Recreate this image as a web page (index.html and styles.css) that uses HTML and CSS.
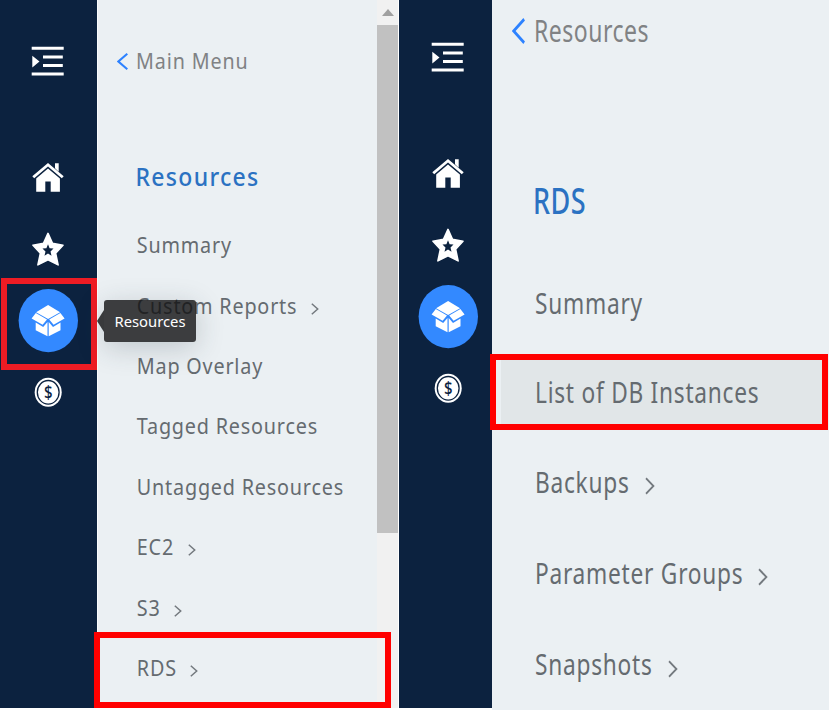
FILE: index.html
```html
<!DOCTYPE html>
<html lang="en">
<head>
<meta charset="utf-8">
<title>Resources menu</title>
<link rel="stylesheet" href="styles.css">
</head>
<body>
<svg class="defs" aria-hidden="true">
  <symbol id="i-menu" viewBox="0 30 97 80">
    <path fill="#fff" d="M31.7 46.8h32v3h-32zM43 55.4h19.8v3.2H43zM43 63.9h19.8v3.2H43zM31.7 72.5h32v3h-32zM32.3 55.7l7.2 5.9-7.2 6z"/>
  </symbol>
  <symbol id="i-home" viewBox="0 140 97 72">
    <path fill="#fff" d="M55 163.3h3.7v8.5L55 168.2z"/>
    <path fill="#fff" d="M48 163l15.7 13.2-1.9 2.1L48 166.5l-13.8 11.8-1.9-2.1z"/>
    <path fill="#fff" d="M48 168.4l11.9 10.2v13.2h-9.2v-10.3h-5.4v10.3h-9.1v-13.2z"/>
  </symbol>
  <symbol id="i-star" viewBox="0 212 97 72">
    <path fill="#fff" stroke="#fff" stroke-width="1.6" stroke-linejoin="round" d="M48 233.4l4.4 9.8 10.6 2-7.4 8 2.5 11.7L48 259.8 37.9 264.9l2.5-11.7-7.4-8 10.6-2z"/>
    <path fill="#0c223f" d="M48 244.2l1.6 4 3.9.3-3 2.9 1 4.4-3.5-2.4-3.5 2.4 1-4.4-3-2.9 3.9-.3z"/>
  </symbol>
  <symbol id="i-box" viewBox="0 284 97 72">
    <ellipse cx="48.3" cy="320.6" rx="29.7" ry="31.6" fill="#3389ff"/>
    <g fill="#fff">
      <path d="M48.1 305l12 7.2-12 6.8-12-6.8zM35.8 313.1l11.2 6.4-4.4 5.3-11-6.2zM60.4 313.1l-11.2 6.4 4.4 5.3 11-6.2z"/>
      <path d="M35.7 322.4l7.5 4.5 4.3-5v14.4l-11.8-6zM60.5 322.4l-7.5 4.5-4.3-5v14.4l11.8-6z"/>
    </g>
  </symbol>
  <symbol id="i-coin" viewBox="0 356 97 72">
    <ellipse cx="48.2" cy="392.3" rx="13.5" ry="14.5" fill="#fff"/>
    <ellipse cx="48.2" cy="392.3" rx="10.9" ry="11.8" fill="none" stroke="#0c223f" stroke-width="1.3"/>
    <text transform="translate(48.2 398.9) scale(1 1.15)" text-anchor="middle" class="dollar">$</text>
  </symbol>
  <symbol id="i-next" viewBox="0 0 8 12">
    <path fill="none" stroke="#73797e" stroke-width="1.5" d="M.8.8L6.7 6 .8 11.2"/>
  </symbol>
</svg>

<main class="screens">
  <nav class="rail">
    <svg class="menu-icon"><use href="#i-menu"/></svg>
    <svg><use href="#i-home"/></svg>
    <svg><use href="#i-star"/></svg>
    <svg><use href="#i-box"/></svg>
    <svg><use href="#i-coin"/></svg>
    <div class="mark mark-icon"></div>
    <div class="tooltip">Resources</div>
  </nav>

  <section class="panel panel-main">
    <div class="back">
      <svg class="chev-back" viewBox="0 0 11 17" preserveAspectRatio="none"><path d="M10.3 .8L1.4 8.5l8.9 7.7"/></svg>
      <span class="label">Main Menu</span>
    </div>
    <h2><span class="label">Resources</span></h2>
    <ul class="list">
      <li><span class="label">Summary</span></li>
      <li><span class="label">Custom Reports</span><svg class="next"><use href="#i-next"/></svg></li>
      <li><span class="label">Map Overlay</span></li>
      <li><span class="label">Tagged Resources</span></li>
      <li><span class="label">Untagged Resources</span></li>
      <li><span class="label">EC2</span><svg class="next"><use href="#i-next"/></svg></li>
      <li><span class="label">S3</span><svg class="next"><use href="#i-next"/></svg></li>
      <li><span class="label">RDS</span><svg class="next"><use href="#i-next"/></svg></li>
    </ul>
    <div class="mark mark-rds"></div>
  </section>

  <div class="scroll">
    <svg class="arrow" viewBox="0 0 12 7"><path d="M0 7L6 0l6 7z"/></svg>
    <div class="thumb"></div>
  </div>

  <nav class="rail rail-sub">
    <svg class="menu-icon"><use href="#i-menu"/></svg>
    <svg><use href="#i-home"/></svg>
    <svg><use href="#i-star"/></svg>
    <svg><use href="#i-box"/></svg>
    <svg><use href="#i-coin"/></svg>
  </nav>

  <section class="panel panel-sub">
    <div class="back">
      <svg class="chev-back" viewBox="0 0 11 17" preserveAspectRatio="none"><path d="M10.3 .8L1.4 8.5l8.9 7.7"/></svg>
      <span class="label">Resources</span>
    </div>
    <h2><span class="label">RDS</span></h2>
    <ul class="list">
      <li><span class="label">Summary</span></li>
      <li class="active"><span class="label">List of DB Instances</span></li>
      <li><span class="label">Backups</span><svg class="next" viewBox="0 0 8 12" preserveAspectRatio="none"><path d="M.8.8L6.7 6 .8 11.2"/></svg></li>
      <li><span class="label">Parameter Groups</span><svg class="next" viewBox="0 0 8 12" preserveAspectRatio="none"><path d="M.8.8L6.7 6 .8 11.2"/></svg></li>
      <li><span class="label">Snapshots</span><svg class="next" viewBox="0 0 8 12" preserveAspectRatio="none"><path d="M.8.8L6.7 6 .8 11.2"/></svg></li>
    </ul>
    <div class="mark mark-db"></div>
  </section>
</main>
</body>
</html>
```
FILE: styles.css
```css
* { box-sizing: border-box; }

body {
  margin: 0;
  background: #fff;
  font-family: "Noto Sans", "Open Sans", sans-serif;
  color: #656b70;
}

.defs { position: absolute; width: 0; height: 0; }

.screens {
  display: grid;
  grid-template-columns: 97px 280px 22px 93px 337px;
  width: 829px;
  height: 710px;
  overflow: hidden;
}

/* icon rails */
.rail {
  position: relative;
  height: 708px;
  padding-top: 30px;
  background: #0c223f;
}
.rail svg { display: block; width: 97px; height: 72px; }
.rail .menu-icon { height: 80px; margin-bottom: 30px; }
.rail-sub { padding-top: 26px; overflow: hidden; }
.rail-sub svg { margin-left: 1px; }

.dollar { font: 500 15px "Noto Sans", sans-serif; fill: #0c223f; }

.tooltip {
  position: absolute;
  z-index: 3;
  left: 104px;
  top: 300px;
  width: 92px;
  height: 42px;
  border-radius: 3px;
  background: rgba(16, 16, 17, .8);
  box-shadow: 0 6px 28px rgba(40, 55, 70, .22);
  color: #fff;
  font-size: 14.8px;
  line-height: 43px;
  text-align: center;
}
.tooltip::before {
  content: "";
  position: absolute;
  left: -7px;
  top: 10px;
  border: solid transparent;
  border-width: 11px 7px 11px 0;
  border-right-color: rgba(16, 16, 17, .8);
}

/* red highlight frames */
.mark { position: absolute; z-index: 2; border: 6px solid #f00; }
.mark-icon { left: 1px; top: 278px; width: 96px; height: 92px; border-color: #ee1c24; }
.mark-rds { left: -4px; top: 632px; width: 297px; height: 76px; }
.mark-db { left: -2px; top: 354px; width: 338px; height: 76px; }

/* menu panels */
.panel { position: relative; background: #ebf0f3; }
.panel-main { height: 708px; border-left: 1px solid #fafcfd; }

.back { display: flex; align-items: center; color: #808284; }
.chev-back { fill: none; stroke: #2d82ff; stroke-width: 2.1; }

h2 { display: flex; align-items: center; margin: 0; color: #2b72c2; font-weight: 500; }
.list { margin: 0; padding: 0; list-style: none; }
.list li { display: flex; align-items: center; white-space: nowrap; }

/* condensed look: letters are stretched vertically */
.panel-main .label { transform: scaleY(1.1); }
.panel-sub .label { transform: scaleY(1.32); }

.panel-main .back { height: 122px; padding-left: 19px; font-size: 19.7px; letter-spacing: .9px; }
.panel-main .back .label { margin-bottom: 1px; }
.panel-main .chev-back { width: 11px; height: 17px; margin-right: 8px; }
.panel-main h2 { height: 107px; margin-bottom: -14.4px; padding-left: 37.5px; font-size: 23px; letter-spacing: 1.3px; }
.panel-main .list li { height: 60.4px; padding-left: 38.8px; font-size: 19.8px; letter-spacing: .8px; }
.next { width: 8px; height: 12px; margin: 7px 0 0 13.5px; }

/* scrollbar */
.scroll { height: 708px; background: #f1f1f1; border-right: 1px solid #fff; padding-top: 9px; }
.arrow { display: block; width: 12px; height: 7px; margin: 0 0 9px 5px; fill: #a0a0a0; }
.thumb { height: 508px; background: #c1c1c1; }

.panel-sub .back { height: 61px; padding: 0 0 2px 20px; font-size: 23px; letter-spacing: .5px; }
.panel-sub .chev-back { width: 13px; height: 26px; margin: 2px 9px 0 0; }
.panel-sub h2 { height: 278px; margin-bottom: -82px; padding-left: 41px; font-size: 27px; letter-spacing: .5px; }
.panel-sub .list { display: grid; grid-template-rows: 89.6px 89px 90.4px 92px 91px; }
.panel-sub li { padding: 1px 0 0 43px; font-size: 22.7px; letter-spacing: .75px; }
.panel-sub .active { position: relative; z-index: 0; }
.panel-sub .active::before {
  content: "";
  position: absolute;
  z-index: -1;
  inset: 12px 7px 11px 9px;
  background: #e1e6e8;
}
.panel-sub .next {
  width: 10px;
  height: 18px;
  margin: 10px 0 0 15px;
  fill: none;
  stroke: #73797e;
  stroke-width: 1.4;
}
```
